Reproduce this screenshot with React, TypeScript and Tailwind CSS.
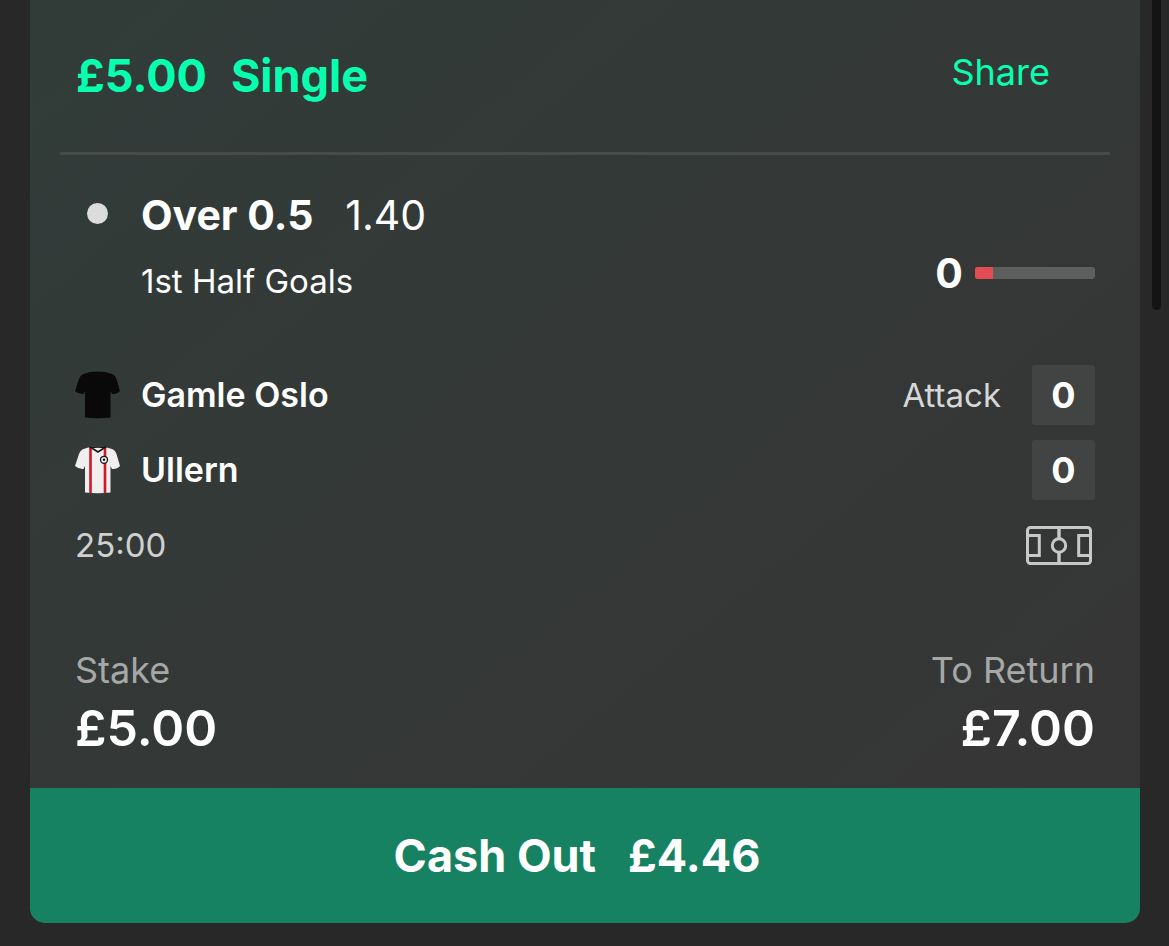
const bet = {
  stake: "£5.00",
  type: "Single",
  selection: "Over 0.5",
  odds: "1.40",
  market: "1st Half Goals",
  goals: 0,
  progress: 15,
  clock: "25:00",
  toReturn: "£7.00",
  cashOut: "£4.46",
};

const SHIRT = "M15 1 Q23 0 30 1 L37 3 Q40 4 41.5 8 L45 20 Q42 23.5 37 23 L35.5 20 V46.5 Q23 48 10 46.5 V20 L8.5 23 Q4 23.5 0 20 L4 8 Q5.5 4 8.5 3 Z";

function BlackShirt() {
  return (
    <svg viewBox="0 0 46 49" className="w-[46px] h-[49px]" aria-hidden="true">
      <path d={SHIRT} fill="#090909" />
    </svg>
  );
}

function StripedShirt() {
  return (
    <svg viewBox="0 0 46 49" className="w-[46px] h-[49px]" aria-hidden="true">
      <path d={SHIRT} fill="#f0eeee" />
      <path d="M15.5 1 V47 M30 1 V47" stroke="#cf1925" strokeWidth="2.6" />
      <path d="M16 1.5 L23 6 L30 1.5 Q23 0.5 16 1.5 Z" fill="#f0eeee" stroke="#161616" strokeWidth="1.6" />
      <circle cx="29" cy="13.8" r="3.5" fill="#f0eeee" stroke="#161616" strokeWidth="1.3" />
      <circle cx="29" cy="13.8" r="1.2" fill="#161616" />
    </svg>
  );
}

function PitchIcon() {
  return (
    <svg viewBox="0 0 66 39" className="w-[66px] h-[39px]" fill="none" stroke="#c7c9c8" strokeWidth="3" aria-hidden="true">
      <rect x="1.5" y="1.5" width="63" height="36" rx="3" />
      <path d="M33 1.5 V12.5 M33 26.5 V37.5" strokeWidth="3.4" />
      <circle cx="33" cy="19.5" r="6.7" />
      <path d="M3 9.5 H13.3 V29.5 H3 M63 9.5 H52.7 V29.5 H63" />
    </svg>
  );
}

const teams = [
  { name: "Gamle Oslo", score: 0, status: "Attack", shirt: <BlackShirt /> },
  { name: "Ullern", score: 0, status: "", shirt: <StripedShirt /> },
];

export default function App() {
  return (
    <div className="min-h-screen bg-[#282828] pl-[30px] pr-2 pb-6 flex items-start font-['Inter',sans-serif] text-white">
      <main className="flex-1 rounded-b-[15px] overflow-hidden bg-linear-to-br from-[#313c39] via-[#343837] to-[#363535]">
        {/* Header */}
        <header className="mx-[30px] h-[155px] border-b-3 border-[#474c4a] pl-4 pr-[60px] flex items-center justify-between text-[#08ffb0]">
          <h1 className="flex gap-6 text-[45px] leading-[48px] font-bold">
            <span>{bet.stake}</span>
            <span>{bet.type}</span>
          </h1>
          <button type="button" className="text-[36px] leading-[44px] pb-2">Share</button>
        </header>

        {/* Selection */}
        <section className="px-[45px] pt-9 flex items-end justify-between">
          <div className="flex">
            <div className="w-[66px] pl-3 pt-3">
              <div className="size-[21px] rounded-full bg-[#dddcdc]" />
            </div>
            <div>
              <p className="flex gap-8 text-[41px] leading-[48px]">
                <span className="font-bold">{bet.selection}</span>
                <span>{bet.odds}</span>
              </p>
              <p className="mt-5 text-[33px] leading-[44px]">{bet.market}</p>
            </div>
          </div>
          <div className="flex items-center gap-3 pb-1.5">
            <span className="text-[41px] leading-[48px] font-bold">{bet.goals}</span>
            <div role="progressbar" aria-label={bet.market} aria-valuenow={bet.progress} className="w-[120px] h-3 rounded-[3px] overflow-hidden bg-[#5c5f5e]">
              <div className="h-full bg-[#e24c52]" style={{ width: `${bet.progress}%` }} />
            </div>
          </div>
        </section>

        {/* Match */}
        <section className="px-[45px] pt-[62px] flex flex-col gap-[15px] text-[33px] leading-[44px]">
          {teams.map((team) => (
            <div key={team.name} className="h-[60px] flex items-center">
              <div className="w-[66px]">{team.shirt}</div>
              <span className="flex-1 text-[34px] font-semibold">{team.name}</span>
              <span className="mr-[31px] text-[#d6d7d7]">{team.status}</span>
              <span className="w-[63px] h-full rounded-[3px] bg-[#424443] flex items-center justify-center text-[36px] font-bold">
                {team.score}
              </span>
            </div>
          ))}
          <div className="h-[60px] flex items-center justify-between pr-[3px]">
            <span className="text-[#cfd1d0]">{bet.clock}</span>
            <button type="button" aria-label="Match view">
              <PitchIcon />
            </button>
          </div>
        </section>

        {/* Returns */}
        <section className="px-[45px] pt-[73px] pb-8 flex justify-between">
          <div>
            <p className="text-[36px] leading-[44px] text-[#a5a8a7]">Stake</p>
            <p className="mt-2 text-[50px] leading-[56px] font-semibold">{bet.stake}</p>
          </div>
          <div className="text-right">
            <p className="text-[36px] leading-[44px] text-[#a5a8a7]">To Return</p>
            <p className="mt-2 text-[50px] leading-[56px] font-semibold">{bet.toReturn}</p>
          </div>
        </section>

        <button type="button" className="w-full h-[135px] bg-[#178262] pr-4 flex items-center justify-center gap-8 text-[45px] leading-[48px] font-bold">
          <span>Cash Out</span>
          <span>{bet.cashOut}</span>
        </button>
      </main>

      {/* Scroll thumb */}
      <div className="ml-3 w-[9px] h-[310px] rounded-b-full bg-[#141414]" />
    </div>
  );
}
